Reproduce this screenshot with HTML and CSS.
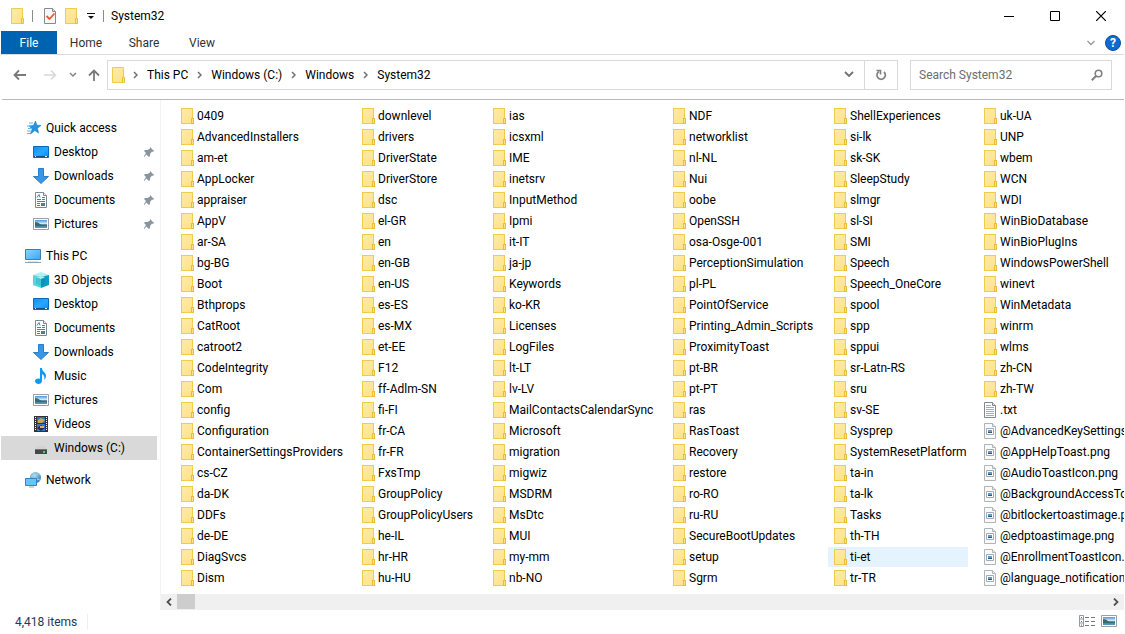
FILE: index.html
```html
<!DOCTYPE html>
<html lang="en">
<head>
<meta charset="utf-8">
<title>System32</title>
<link rel="stylesheet" href="styles.css">
</head>
<body>
<svg class="defs" aria-hidden="true">
  <defs>
    <linearGradient id="g-folder" x1="0" y1="0" x2="1" y2="1"><stop offset="0" stop-color="#ffeaa6"/><stop offset="1" stop-color="#ffe28a"/></linearGradient>
    <linearGradient id="g-screen" x1="0" y1="0" x2="1" y2="1"><stop offset="0" stop-color="#0c90f4"/><stop offset=".5" stop-color="#2aa7ff"/><stop offset="1" stop-color="#0c90f4"/></linearGradient>
    <linearGradient id="g-pc" x1="0" y1="0" x2="1" y2="1"><stop offset="0" stop-color="#8ed5fd"/><stop offset="1" stop-color="#39a6f4"/></linearGradient>
    <linearGradient id="g-photo" x1="0" y1="0" x2="0" y2="1"><stop offset="0" stop-color="#4f93dc"/><stop offset=".45" stop-color="#d3ebf7"/><stop offset=".6" stop-color="#3f7288"/><stop offset="1" stop-color="#5b9cc9"/></linearGradient>
    <radialGradient id="g-globe" cx=".4" cy=".3" r=".8"><stop offset="0" stop-color="#b5e2f5"/><stop offset="1" stop-color="#23709f"/></radialGradient>
    <symbol id="i-folder" viewBox="0 0 16 16"><path d="M1.500.5h11v15h-11z" fill="url(#g-folder)" stroke="#f0cc4c"/><path d="M11.500 10.500h2v5h-2z" fill="#ffe38c" stroke="#e8bd3c"/></symbol>
    <symbol id="i-star" viewBox="0 0 16 16"><path d="M9.500 1l1.300 4.200 4.200.3-3.600 2.700 1.200 4.800-3.800-2.500L4.500 14l1.700-5L3 6l4.500-.6z" fill="#2494df" stroke="#117bc5" stroke-width=".6"/><path d="M3 3h4M1 6h4M2 8.500h4M1 11h4M1 13.500h3" stroke="#65b8ed"/></symbol>
    <symbol id="i-desktop" viewBox="0 0 16 16"><path d="M.5 2.500h15v11H.5z" fill="url(#g-screen)" stroke="#0b6bb8"/><path d="M1 12.500h14" stroke="#064e8e"/><path d="M2 12.500h1M12 12.500h2" stroke="#fff"/></symbol>
    <symbol id="i-down" viewBox="0 0 16 16"><path d="M5.500.5h5v8h5L8 15.500.5 8.500h5z" fill="#3896e4" stroke="#287fcc"/></symbol>
    <symbol id="i-doc" viewBox="0 0 16 16"><path d="M2.500.5h8l3 3v12h-11z" fill="#fff" stroke="#81898f"/><path d="M10.500.5v3h3" fill="#e6e9eb" stroke="#81898f"/><path d="M4 5.500l2-3 1 3M4 7.500h4M9 5.500h3M9 7.500h3M4 9.500h8M4 11.500h3M4 13.500h3" fill="none" stroke="#3288c6"/><path d="M8 11h4v3H8z" fill="#457f9e"/></symbol>
    <symbol id="i-picture" viewBox="0 0 16 16"><path d="M.5 2.500h15v11H.5z" fill="#fff" stroke="#9a9fa3"/><path d="M2 4h12v8H2z" fill="url(#g-photo)"/><path d="M2 6q3 0 5 2t7 1v1H2z" fill="#376b73"/></symbol>
    <symbol id="i-pc" viewBox="0 0 16 16"><path d="M.5 1.500h15v10H.5z" fill="url(#g-pc)" stroke="#3d7fae"/><path d="M0 14.500h16" stroke="#93a1aa"/><path d="M3 13.500h10" stroke="#dce2e6"/></symbol>
    <symbol id="i-cube" viewBox="0 0 16 16"><path d="M0 3l8-3 8 3-8 3z" fill="#b5edf2"/><path d="M0 3l8 2v11l-8-3z" fill="#5cd3da"/><path d="M16 3L8 5v11l8-3z" fill="#0d9cc2"/><path d="M3 5l5-1 4 2v6l-4 2-5-2z" fill="#42c5d3"/><path d="M3 5l5 2 4-2-4-1z" fill="#aeeaf0"/><path d="M8 7l4-1v6l-4 3z" fill="#0d91b9"/></symbol>
    <symbol id="i-music" viewBox="0 0 16 16"><path d="M7 0h2c0 4 4 4 4 8 0 2-1 3-2 4 1-3 0-5-2-6v7c0 4-7 4-7 0 0-2 3-3 5-2z" fill="#0c9af5"/></symbol>
    <symbol id="i-video" viewBox="0 0 16 16"><path d="M1 0h14v16H1z" fill="#333"/><path d="M4 1h8v6H4z" fill="#326fc2"/><path d="M4 8h8v7H4z" fill="#3977ce"/><path d="M5 4l3-2 4 2-3 3H5z" fill="#d4a83b"/><path d="M4 12l4-3 4 3-4 3z" fill="#252b58"/><path d="M7 10h4v2H7z" fill="#ddb54c"/><path d="M2.500 1v14M13.500 1v14" stroke="#fff" stroke-dasharray="1 1"/></symbol>
    <symbol id="i-drive" viewBox="0 0 16 16"><path d="M4 6h8l2 4H2z" fill="#d0d2d3"/><path d="M2 9h12v5H2z" fill="#42474a"/><path d="M2 9.500h12" stroke="#717779"/><path d="M10 11h2v2h-2z" fill="#34e24d"/></symbol>
    <symbol id="i-network" viewBox="0 0 16 16"><circle cx="10.500" cy="5.500" r="5.500" fill="url(#g-globe)"/><path d="M6 4q3 2 5-1t4 0M8 8q4-2 7 0" fill="none" stroke="#9dd0e8"/><path d="M.5 6.500h11v7H.5z" fill="#69c4fa" stroke="#3186bd"/><path d="M4 15h5" stroke="#9eabb3"/></symbol>
    <symbol id="i-pin" viewBox="0 0 12 12"><path d="M7 1l4 4-1 1-1-.5L7 8v2L6 11 3.500 8.500 1 11l0-1 2-3L1 5l1-1h2.500L7 2.500z" fill="#8795a1"/></symbol>
    <symbol id="i-txt" viewBox="0 0 16 16"><path d="M2.500.5h8l3 3v12h-11z" fill="#fff" stroke="#85898c"/><path d="M10.500.5v3h3" fill="#ddd" stroke="#85898c"/><path d="M4 3.500h5M4 5.500h8M4 7.500h8M4 9.500h8M4 11.500h8M4 13.500h8" stroke="#a7abae"/></symbol>
    <symbol id="i-png" viewBox="0 0 16 16"><path d="M2.500.5h8l3 3v12h-11z" fill="#fafafa" stroke="#b1b4b6"/><path d="M10.500.5v3h3" fill="#e5e5e5" stroke="#b1b4b6"/><path d="M4.500 5.500h7v6h-7z" fill="#fff" stroke="#a3abb1"/><path d="M6 7h4v3H6z" fill="#5b9bd0"/><path d="M6 9.500h4" stroke="#24577a"/></symbol>
  </defs>
</svg>

<div class="window">
  <header class="titlebar">
    <svg class="icon" viewBox="0 0 16 16"><use href="#i-folder"/></svg>
    <span class="rule rule-first"></span>
    <button class="quick" aria-label="Properties"><svg class="icon" viewBox="0 0 16 16"><path d="M2.500.5h8l3 3v12h-11z" fill="#f8f8fa" stroke="#858a90"/><path d="M10.500.5v3h3" fill="#ddd" stroke="#858a90"/><path d="M4.500 8l3 3 5-5.500" fill="none" stroke="#ee5a24" stroke-width="1.800"/></svg></button>
    <button class="quick" aria-label="New folder"><svg class="icon" viewBox="0 0 16 16"><use href="#i-folder"/></svg></button>
    <button class="quick customize" aria-label="Customize toolbar"><svg width="8" height="8" viewBox="0 0 8 8"><path d="M0 1.500h8" stroke="#111"/><path d="M1 4h6L4 7z" fill="#111"/></svg></button>
    <span class="rule"></span>
    <h1 class="title">System32</h1>
    <div class="controls">
      <button aria-label="Minimize"><svg width="10" height="10" viewBox="0 0 10 10"><path d="M0 5.500h10" stroke="#000"/></svg></button>
      <button aria-label="Maximize"><svg width="10" height="10" viewBox="0 0 10 10"><path d="M.5.5h9v9h-9z" fill="none" stroke="#000"/></svg></button>
      <button aria-label="Close"><svg width="10" height="10" viewBox="0 0 10 10"><path d="M0 0l10 10M10 0L0 10" stroke="#000" stroke-width="1.200"/></svg></button>
    </div>
  </header>

  <nav class="ribbon" aria-label="Ribbon">
    <button class="tab file">File</button>
    <button class="tab">Home</button>
    <button class="tab">Share</button>
    <button class="tab">View</button>
    <button class="expand" aria-label="Expand ribbon"><svg width="8" height="6" viewBox="0 0 8 6"><path d="M.5 1L4 4.500 7.500 1" fill="none" stroke="#999" stroke-width="1.300"/></svg></button>
    <button class="help" aria-label="Help">?</button>
  </nav>

  <div class="navbar">
    <button class="nav back" aria-label="Back"><svg width="14" height="12" viewBox="0 0 14 12"><path d="M13 6H1.500M6 1.500L1.500 6 6 10.500" fill="none" stroke="#7a7a7a" stroke-width="1.800"/></svg></button>
    <button class="nav forward" aria-label="Forward"><svg width="14" height="12" viewBox="0 0 14 12"><path d="M1 6h11.500M8 1.500L12.500 6 8 10.500" fill="none" stroke="#d9d9d9" stroke-width="1.600"/></svg></button>
    <button class="nav recent" aria-label="Recent locations"><svg width="8" height="6" viewBox="0 0 8 6"><path d="M1 1l3 3 3-3" fill="none" stroke="#858585" stroke-width="1.500"/></svg></button>
    <button class="nav up" aria-label="Up"><svg width="12" height="12" viewBox="0 0 12 12"><path d="M6 12V1.500M1 6.500l5-5 5 5" fill="none" stroke="#7a7a7a" stroke-width="1.800"/></svg></button>
    <div class="address">
      <svg class="icon" viewBox="0 0 16 16"><use href="#i-folder"/></svg>
      <svg class="sep" viewBox="0 0 5 8"><path d="M1 1l3 3-3 3"/></svg>
      <a href="#pc">This PC</a>
      <svg class="sep" viewBox="0 0 5 8"><path d="M1 1l3 3-3 3"/></svg>
      <a href="#c">Windows (C:)</a>
      <svg class="sep" viewBox="0 0 5 8"><path d="M1 1l3 3-3 3"/></svg>
      <a href="#windows">Windows</a>
      <svg class="sep" viewBox="0 0 5 8"><path d="M1 1l3 3-3 3"/></svg>
      <a href="#system32">System32</a>
      <button class="history" aria-label="Previous locations"><svg width="10" height="7" viewBox="0 0 10 7"><path d="M1 1l4 4 4-4" fill="none" stroke="#707070" stroke-width="1.800"/></svg></button>
      <button class="refresh" aria-label="Refresh"><svg width="12" height="12" viewBox="0 0 12 12"><path d="M9 3a4.200 4.200 0 1 1-5-.5" fill="none" stroke="#808080" stroke-width="1.700"/><path d="M1.500 1.500h4V5.500" fill="none" stroke="#808080" stroke-width="1.600"/></svg></button>
    </div>
    <form class="search">
      <input type="search" aria-label="Search System32" placeholder="Search System32">
      <button type="button" aria-label="Search"><svg width="12" height="12" viewBox="0 0 12 12"><circle cx="7.500" cy="4.500" r="3.300" fill="none" stroke="#808080" stroke-width="1.600"/><path d="M5 7L.8 11.200" stroke="#808080" stroke-width="2"/></svg></button>
    </form>
  </div>

  <div class="body">
    <nav class="sidebar" aria-label="Folders">
      <ul>
        <li><a class="root quick-access" href="#qa"><svg class="icon" viewBox="0 0 16 16"><use href="#i-star"/></svg>Quick access</a></li>
        <li><a href="#d1"><svg class="icon" viewBox="0 0 16 16"><use href="#i-desktop"/></svg>Desktop<svg class="pin" viewBox="0 0 12 12"><use href="#i-pin"/></svg></a></li>
        <li><a href="#d2"><svg class="icon" viewBox="0 0 16 16"><use href="#i-down"/></svg>Downloads<svg class="pin" viewBox="0 0 12 12"><use href="#i-pin"/></svg></a></li>
        <li><a href="#d3"><svg class="icon" viewBox="0 0 16 16"><use href="#i-doc"/></svg>Documents<svg class="pin" viewBox="0 0 12 12"><use href="#i-pin"/></svg></a></li>
        <li><a href="#d4"><svg class="icon" viewBox="0 0 16 16"><use href="#i-picture"/></svg>Pictures<svg class="pin" viewBox="0 0 12 12"><use href="#i-pin"/></svg></a></li>
      </ul>
      <ul>
        <li><a class="root" href="#pc"><svg class="icon" viewBox="0 0 16 16"><use href="#i-pc"/></svg>This PC</a></li>
        <li><a href="#p1"><svg class="icon" viewBox="0 0 16 16"><use href="#i-cube"/></svg>3D Objects</a></li>
        <li><a href="#p2"><svg class="icon" viewBox="0 0 16 16"><use href="#i-desktop"/></svg>Desktop</a></li>
        <li><a href="#p3"><svg class="icon" viewBox="0 0 16 16"><use href="#i-doc"/></svg>Documents</a></li>
        <li><a href="#p4"><svg class="icon" viewBox="0 0 16 16"><use href="#i-down"/></svg>Downloads</a></li>
        <li><a href="#p5"><svg class="icon" viewBox="0 0 16 16"><use href="#i-music"/></svg>Music</a></li>
        <li><a href="#p6"><svg class="icon" viewBox="0 0 16 16"><use href="#i-picture"/></svg>Pictures</a></li>
        <li><a href="#p7"><svg class="icon" viewBox="0 0 16 16"><use href="#i-video"/></svg>Videos</a></li>
        <li><a class="selected" href="#c"><svg class="icon" viewBox="0 0 16 16"><use href="#i-drive"/></svg>Windows (C:)</a></li>
      </ul>
      <ul>
        <li><a class="root" href="#net"><svg class="icon" viewBox="0 0 16 16"><use href="#i-network"/></svg>Network</a></li>
      </ul>
    </nav>

    <main class="pane">
      <div class="files">
        <ul>
          <li>0409</li><li>AdvancedInstallers</li><li>am-et</li><li>AppLocker</li><li>appraiser</li><li>AppV</li><li>ar-SA</li><li>bg-BG</li><li>Boot</li><li>Bthprops</li><li>CatRoot</li><li>catroot2</li><li>CodeIntegrity</li><li>Com</li><li>config</li><li>Configuration</li><li>ContainerSettingsProviders</li><li>cs-CZ</li><li>da-DK</li><li>DDFs</li><li>de-DE</li><li>DiagSvcs</li><li>Dism</li>
        </ul>
        <ul>
          <li>downlevel</li><li>drivers</li><li>DriverState</li><li>DriverStore</li><li>dsc</li><li>el-GR</li><li>en</li><li>en-GB</li><li>en-US</li><li>es-ES</li><li>es-MX</li><li>et-EE</li><li>F12</li><li>ff-Adlm-SN</li><li>fi-FI</li><li>fr-CA</li><li>fr-FR</li><li>FxsTmp</li><li>GroupPolicy</li><li>GroupPolicyUsers</li><li>he-IL</li><li>hr-HR</li><li>hu-HU</li>
        </ul>
        <ul>
          <li>ias</li><li>icsxml</li><li>IME</li><li>inetsrv</li><li>InputMethod</li><li>Ipmi</li><li>it-IT</li><li>ja-jp</li><li>Keywords</li><li>ko-KR</li><li>Licenses</li><li>LogFiles</li><li>lt-LT</li><li>lv-LV</li><li>MailContactsCalendarSync</li><li>Microsoft</li><li>migration</li><li>migwiz</li><li>MSDRM</li><li>MsDtc</li><li>MUI</li><li>my-mm</li><li>nb-NO</li>
        </ul>
        <ul>
          <li>NDF</li><li>networklist</li><li>nl-NL</li><li>Nui</li><li>oobe</li><li>OpenSSH</li><li>osa-Osge-001</li><li>PerceptionSimulation</li><li>pl-PL</li><li>PointOfService</li><li>Printing_Admin_Scripts</li><li>ProximityToast</li><li>pt-BR</li><li>pt-PT</li><li>ras</li><li>RasToast</li><li>Recovery</li><li>restore</li><li>ro-RO</li><li>ru-RU</li><li>SecureBootUpdates</li><li>setup</li><li>Sgrm</li>
        </ul>
        <ul>
          <li>ShellExperiences</li><li>si-lk</li><li>sk-SK</li><li>SleepStudy</li><li>slmgr</li><li>sl-SI</li><li>SMI</li><li>Speech</li><li>Speech_OneCore</li><li>spool</li><li>spp</li><li>sppui</li><li>sr-Latn-RS</li><li>sru</li><li>sv-SE</li><li>Sysprep</li><li>SystemResetPlatform</li><li>ta-in</li><li>ta-lk</li><li>Tasks</li><li>th-TH</li><li class="hover">ti-et</li><li>tr-TR</li>
        </ul>
        <ul>
          <li>uk-UA</li><li>UNP</li><li>wbem</li><li>WCN</li><li>WDI</li><li>WinBioDatabase</li><li>WinBioPlugIns</li><li>WindowsPowerShell</li><li>winevt</li><li>WinMetadata</li><li>winrm</li><li>wlms</li><li>zh-CN</li><li>zh-TW</li>
          <li class="doc"><svg class="icon" viewBox="0 0 16 16"><use href="#i-txt"/></svg>.txt</li>
          <li class="doc"><svg class="icon" viewBox="0 0 16 16"><use href="#i-png"/></svg>@AdvancedKeySettingsNotification.png</li>
          <li class="doc"><svg class="icon" viewBox="0 0 16 16"><use href="#i-png"/></svg>@AppHelpToast.png</li>
          <li class="doc"><svg class="icon" viewBox="0 0 16 16"><use href="#i-png"/></svg>@AudioToastIcon.png</li>
          <li class="doc"><svg class="icon" viewBox="0 0 16 16"><use href="#i-png"/></svg>@BackgroundAccessToastIcon.png</li>
          <li class="doc"><svg class="icon" viewBox="0 0 16 16"><use href="#i-png"/></svg>@bitlockertoastimage.png</li>
          <li class="doc"><svg class="icon" viewBox="0 0 16 16"><use href="#i-png"/></svg>@edptoastimage.png</li>
          <li class="doc"><svg class="icon" viewBox="0 0 16 16"><use href="#i-png"/></svg>@EnrollmentToastIcon.png</li>
          <li class="doc"><svg class="icon" viewBox="0 0 16 16"><use href="#i-png"/></svg>@language_notification_icon.png</li>
        </ul>
      </div>
      <div class="scrollbar">
        <button aria-label="Scroll left"><svg width="6" height="8" viewBox="0 0 6 8"><path d="M5 .5L1.500 4 5 7.500" fill="none" stroke="#505050" stroke-width="1.800"/></svg></button>
        <div class="track"><div class="thumb"></div></div>
        <button aria-label="Scroll right"><svg width="6" height="8" viewBox="0 0 6 8"><path d="M1 .5L4.500 4 1 7.500" fill="none" stroke="#505050" stroke-width="1.800"/></svg></button>
      </div>
    </main>
  </div>

  <footer class="status">
    <span class="count">4,418 items</span>
    <div class="views">
      <button aria-label="Details view"><svg class="icon" viewBox="0 0 16 16"><path d="M.5 2.500h4v11h-4zM.5 6h4M.5 10h4" fill="#fff" stroke="#999"/><path d="M2 4.500h1" stroke="#487fb5"/><path d="M2 8.500h1" stroke="#487fb5"/><path d="M2 12h1" stroke="#c33"/><path d="M6 4.500h4M12 4.500h4M6 8.500h4M12 8.500h4M6 12.500h4M12 12.500h4" stroke="#777"/></svg></button>
      <button aria-label="Large icons view"><svg class="icon" viewBox="0 0 16 16"><use href="#i-picture"/></svg></button>
    </div>
  </footer>
</div>
</body>
</html>
```
FILE: styles.css
```css
*, *::before, *::after { box-sizing: border-box; }

body {
  margin: 0;
  background: #fff;
  color: #000;
  font: 12px/16px Roboto, "Open Sans", sans-serif;
}

ul { list-style: none; margin: 0; padding: 0; }
a { color: inherit; text-decoration: none; }
svg { display: block; flex: none; }
button {
  display: flex;
  align-items: center;
  justify-content: center;
  padding: 0;
  border: 0;
  background: none;
  color: inherit;
  font: inherit;
}

.defs { position: absolute; width: 0; height: 0; }
.icon { width: 16px; height: 16px; }

.window {
  display: flex;
  flex-direction: column;
  min-height: 100vh;
  padding: 0 1px;
  overflow: hidden;
}

/* Title bar */
.titlebar { display: flex; align-items: center; height: 31px; padding-left: 9px; }
.rule { width: 1px; height: 12px; background: #8c8c8c; }
.rule-first { margin: 0 9px 0 6px; }
.quick { margin-right: 6px; }
.customize { margin: 0 8px 0 1px; }
.title { margin: 0 0 0 7px; font-size: 12px; font-weight: 400; }
.controls { display: flex; margin-left: auto; }
.controls button { width: 46px; height: 30px; }

/* Ribbon */
.ribbon { display: flex; align-items: stretch; height: 24px; border-bottom: 1px solid #dadbdc; color: #333; }
.tab { width: 58px; }
.file { width: 56px; background: #0063b1; color: #fff; }
.expand { width: 16px; margin-left: auto; }
.help {
  align-self: center;
  width: 16px;
  height: 16px;
  margin: 0 3px 0 6px;
  border: 1px solid #0b4f9e;
  border-radius: 50%;
  background: #0b6bd3;
  color: #fff;
  font-weight: 700;
}

/* Address row */
.navbar { display: flex; align-items: center; height: 45px; padding: 0 12px 5px 11px; margin-left: 1px; border-bottom: 1px solid #b8b8b8; }
.nav { height: 28px; }
.forward { margin-left: 16px; }
.recent { margin-left: 12px; }
.up { margin: 0 7px 0 11px; }
.address {
  display: flex;
  flex: 1;
  align-items: center;
  height: 30px;
  padding-left: 3px;
  border: 1px solid #d9d9d9;
}
.address a { margin-right: 8px; }
.sep { width: 5px; height: 8px; margin: 0 9px 0 1px; fill: none; stroke: #707070; stroke-width: 1.5; }
.address .icon + .sep { margin-left: 6px; }
.history { width: 30px; height: 28px; margin-left: auto; }
.refresh { width: 33px; height: 28px; border-left: 1px solid #d9d9d9; }
.search { display: flex; width: 202px; height: 30px; margin-left: 12px; border: 1px solid #d9d9d9; }
.search input {
  flex: 1;
  min-width: 0;
  padding: 0 0 0 8px;
  border: 0;
  outline: 0;
  background: none;
  font: inherit;
}
.search input::placeholder { color: #6d6d6d; opacity: 1; }
.search button { width: 28px; }

/* Body */
.body { display: flex; flex: 1; min-height: 0; }
.sidebar { flex: none; width: 160px; padding: 16px 3px 0 0; border-right: 1px solid #f3f3f3; }
.sidebar ul { margin-bottom: 8px; }
.sidebar a { display: flex; align-items: center; gap: 5px; height: 24px; padding: 0 2px 0 32px; }
.sidebar .root { padding-left: 24px; }
.sidebar .quick-access { padding-left: 25px; gap: 4px; }
.sidebar .selected { background: #d9d9d9; }
.pin { width: 12px; height: 12px; margin-left: auto; }

.pane { display: flex; flex: 1; flex-direction: column; min-width: 0; }
.files {
  display: grid;
  flex: 1;
  grid-template-columns: 181px 131px 180px 161px 150px minmax(0, 1fr);
  padding: 6px 0 5px 14px;
  overflow: hidden;
}
.files li {
  position: relative;
  display: flex;
  align-items: center;
  height: 20px;
  margin: 0 10px 1px 0;
  padding-left: 6px;
  white-space: nowrap;
}
.files ul:last-child li { margin-right: 0; }
.files li::before {
  content: "";
  flex: none;
  width: 12px;
  height: 16px;
  margin-right: 4px;
  border: 1px solid #f0cc4c;
  background: linear-gradient(135deg, #ffeaa6, #ffe28a);
}
.files li::after {
  content: "";
  position: absolute;
  left: 16px;
  bottom: 2px;
  width: 3px;
  height: 6px;
  border: 1px solid #e8bd3c;
  background: #ffe38c;
}
.files .doc { padding-left: 4px; gap: 2px; }
.files .doc::before, .files .doc::after { content: none; }
.files .hover { background: #e5f3ff; }

.scrollbar { display: flex; height: 16px; background: #f0f0f0; }
.scrollbar button { width: 16px; }
.track { flex: 1; }
.thumb { width: 18px; height: 15px; background: #cdcdcd; }

/* Status bar */
.status { display: flex; align-items: center; justify-content: space-between; height: 24px; padding: 0 7px 0 14px; color: #1e395b; }
.count { padding-right: 10px; border-right: 1px solid #f0f0f0; }
.views { display: flex; gap: 6px; margin-bottom: 2px; }
```
